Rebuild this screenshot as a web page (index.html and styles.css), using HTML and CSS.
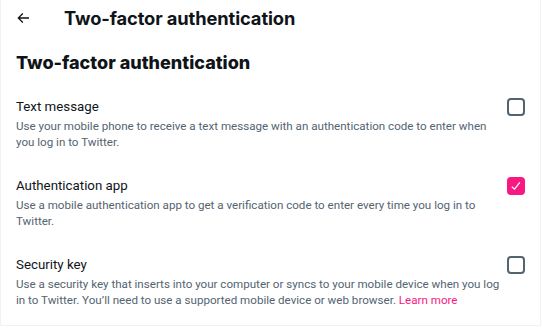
FILE: index.html
```html
<!DOCTYPE html>
<html>
<head>
<meta charset="utf-8">
<link rel="stylesheet" href="styles.css">
</head>
<body>
<div class="column">
  <header class="topbar">
    <button class="back" aria-label="Back">
      <svg viewBox="0 0 24 24" width="16" height="16"><path d="M7.414 13l5.043 5.04-1.414 1.42L3.586 12l7.457-7.46 1.414 1.42L7.414 11H21v2H7.414z"/></svg>
    </button>
    <h1 class="title">Two-factor authentication</h1>
  </header>
  <h2 class="section-title">Two-factor authentication</h2>
  <div class="option">
    <div class="option-text">
      <div class="label">Text message</div>
      <div class="desc">Use your mobile phone to receive a text message with an authentication code to enter when you log in to Twitter.</div>
    </div>
    <span class="check"></span>
  </div>
  <div class="option">
    <div class="option-text">
      <div class="label">Authentication app</div>
      <div class="desc">Use a mobile authentication app to get a verification code to enter every time you log in to Twitter.</div>
    </div>
    <span class="check checked"><svg viewBox="0 0 24 24" width="14" height="14"><path d="M9.64 18.952l-5.55-4.861 1.317-1.504 3.951 3.459 8.459-10.948L19.4 6.32 9.64 18.952z"/></svg></span>
  </div>
  <div class="option">
    <div class="option-text">
      <div class="label">Security key</div>
      <div class="desc">Use a security key that inserts into your computer or syncs to your mobile device when you log in to Twitter. You’ll need to use a supported mobile device or web browser. <a class="link" href="#">Learn more</a></div>
    </div>
    <span class="check"></span>
  </div>
</div>
</body>
</html>
```
FILE: styles.css
```css
html, body {
  margin: 0;
  padding: 0;
  background: #fff;
}
body {
  font-family: Inter, "Noto Sans", sans-serif;
  color: #0f1419;
}
.column {
  width: 539px;
  border-left: 1px solid #eff3f4;
  border-right: 1px solid #eff3f4;
  border-bottom: 1px solid #eff3f4;
}
.topbar {
  display: flex;
  align-items: center;
  height: 35px;
  padding: 0 14px;
  gap: 33px;
}
.back {
  border: 0;
  background: none;
  padding: 0;
  width: 16px;
  height: 16px;
  display: flex;
  color: #0f1419;
}
.back svg { fill: currentColor; }
.title {
  margin: 0;
  font-size: 18.3px;
  font-weight: 700;
  letter-spacing: -0.1px;
}
.section-title {
  margin: 0;
  padding: 16px 15px 13px;
  font-size: 18px;
  font-weight: 800;
  line-height: 24px;
}
.option {
  display: flex;
  align-items: flex-start;
  gap: 2px;
  padding: 10px 15px 17px;
}
.option-text {
  flex: 1;
  min-width: 0;
}
.label {
  font-family: Roboto, Inter, sans-serif;
  font-size: 13.3px;
  line-height: 18px;
  margin-bottom: 3px;
}
.desc {
  font-family: Roboto, Inter, sans-serif;
  font-size: 11.6px;
  line-height: 15.5px;
  color: #536471;
}
.link {
  color: #f91880;
  text-decoration: none;
}
.check {
  flex: none;
  box-sizing: border-box;
  width: 18px;
  height: 18px;
  border: 2px solid #536471;
  border-radius: 4px;
  display: flex;
  align-items: center;
  justify-content: center;
}
.check.checked {
  background: #f91880;
  border-color: #f91880;
}
.check svg { fill: #fff; }
```
